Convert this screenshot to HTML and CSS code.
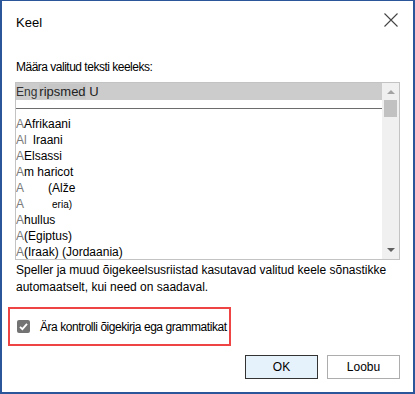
FILE: index.html
```html
<!DOCTYPE html>
<html lang="et">
<head>
<meta charset="utf-8">
<title>Keel</title>
<link rel="stylesheet" href="styles.css">
</head>
<body>
<div class="window">
  <div class="titlebar">
    <div class="title">Keel</div>
    <svg class="close" width="14" height="14" viewBox="0 0 14 14" aria-label="Sulge">
      <path d="M0.5 0.5 L13.5 13.5 M13.5 0.5 L0.5 13.5" stroke="#444" stroke-width="1.1" fill="none"/>
    </svg>
  </div>
  <div class="content">
    <div class="label">Määra valitud teksti keeleks:</div>
    <div class="listbox">
      <div class="items">
        <div class="header"><span class="eng">Eng</span><span class="sel">ripsmed</span><span class="big"> U</span></div>
        <div class="separator"></div>
        <div class="row"><span class="a">A</span>Afrikaani</div>
        <div class="row"><span class="a">Al</span><span class="sp sp6"></span>Iraani</div>
        <div class="row"><span class="a">A</span>Elsassi</div>
        <div class="row"><span class="a">A</span>m haricot</div>
        <div class="row"><span class="a">A</span><span class="sp sp24"></span>(Alže</div>
        <div class="row"><span class="a">A</span><span class="sp sp28"></span><span class="small">eria)</span></div>
        <div class="row"><span class="a">A</span>hullus</div>
        <div class="row"><span class="a">A</span>(Egiptus)</div>
        <div class="row"><span class="a">A</span>(Iraak) (Jordaania)</div>
      </div>
      <div class="scrollbar">
        <div class="arrow up"></div>
        <div class="thumb"></div>
        <div class="track"></div>
        <div class="arrow down"></div>
      </div>
    </div>
    <p class="help">Speller ja muud õigekeelsusriistad kasutavad valitud keele sõnastikke automaatselt, kui need on saadaval.</p>
    <div class="highlight">
      <span class="checkbox">
        <svg width="13" height="13" viewBox="0 0 13 13"><path d="M3 6.8 L5.4 9.2 L10 3.8" stroke="#fff" stroke-width="1.8" fill="none"/></svg>
      </span>
      <span class="check-label">Ära kontrolli õigekirja ega grammatikat</span>
    </div>
    <div class="buttons">
      <button class="btn btn-default">OK</button>
      <button class="btn">Loobu</button>
    </div>
  </div>
</div>
</body>
</html>
```
FILE: styles.css
```css
html, body {
  margin: 0;
  padding: 0;
  background: #ffffff;
}
body {
  font-family: "Liberation Sans", Arial, sans-serif;
  font-size: 12px;
  color: #000;
}
.window {
  width: 415px;
  height: 394px;
  box-sizing: border-box;
  border-style: solid;
  border-color: #2b579a;
  border-width: 1px 2px 2px 2px;
  background: #fff;
  overflow: hidden;
}
.titlebar {
  height: 44px;
  display: flex;
  justify-content: space-between;
  align-items: flex-start;
}
.title {
  font-size: 13px;
  line-height: 16px;
  margin: 14px 0 0 14px;
}
.close {
  display: block;
  margin: 12px 15px 0 0;
}
.content {
  padding: 0 13px;
}
.label {
  margin-top: 14px;
  line-height: 16px;
  margin-left: 1px;
  letter-spacing: -0.5px;
}
.listbox {
  margin-top: 7px;
  height: 178px;
  box-sizing: border-box;
  border: 1px solid #c3c3c3;
  display: flex;
  overflow: hidden;
}
.items {
  flex: 1;
  overflow: hidden;
}
.header {
  height: 17px;
  background: #cccccc;
  line-height: 17px;
  white-space: nowrap;
  overflow: hidden;
}
.eng {
  color: #333;
  font-size: 12px;
}
.sel {
  font-size: 13px;
  color: #222;
  margin-left: 2px;
  background: #c6c6c6;
}
.big {
  font-size: 13px;
  color: #222;
}
.separator {
  margin-top: 8px;
  height: 1px;
  background: #6d6d6d;
  margin-bottom: 7px;
}
.row {
  height: 16px;
  line-height: 16px;
  white-space: nowrap;
}
.a {
  color: #7a7a7a;
}
.sp {
  display: inline-block;
}
.sp6 { width: 6px; }
.sp24 { width: 24px; }
.sp28 { width: 28px; }
.small {
  font-size: 10px;
}
.scrollbar {
  width: 17px;
  background: #f0f0f0;
  display: flex;
  flex-direction: column;
  align-items: center;
}
.arrow {
  width: 0;
  height: 0;
  border-left: 4px solid transparent;
  border-right: 4px solid transparent;
}
.arrow.up {
  margin-top: 7px;
  border-bottom: 4px solid #a3a3a3;
}
.arrow.down {
  margin-bottom: 7px;
  border-top: 4px solid #606060;
}
.thumb {
  margin-top: 6px;
  width: 13px;
  height: 17px;
  background: #c1c1c1;
}
.track {
  flex: 1;
}
.help {
  margin: 2px 0 0 1px;
  line-height: 17px;
}
.highlight {
  margin: 11px 0 0 -7px;
  width: 223px;
  height: 39px;
  box-sizing: border-box;
  border: 2px solid #ef4444;
  display: flex;
  align-items: center;
  padding-left: 7px;
  white-space: nowrap;
}
.checkbox {
  width: 13px;
  height: 13px;
  background: #737373;
  border-radius: 2px;
  flex: none;
  display: flex;
}
.check-label {
  margin-left: 10px;
  line-height: 16px;
  letter-spacing: -0.45px;
}
.buttons {
  margin-top: 9px;
  display: flex;
  justify-content: flex-end;
  gap: 9px;
}
.btn {
  width: 73px;
  height: 24px;
  font-family: inherit;
  font-size: 12px;
  background: #fff;
  border: 1px solid #adadad;
  color: #000;
  padding: 0;
  margin: 0;
}
.btn-default {
  background: #e5f1fb;
  border-color: #333;
}
```
